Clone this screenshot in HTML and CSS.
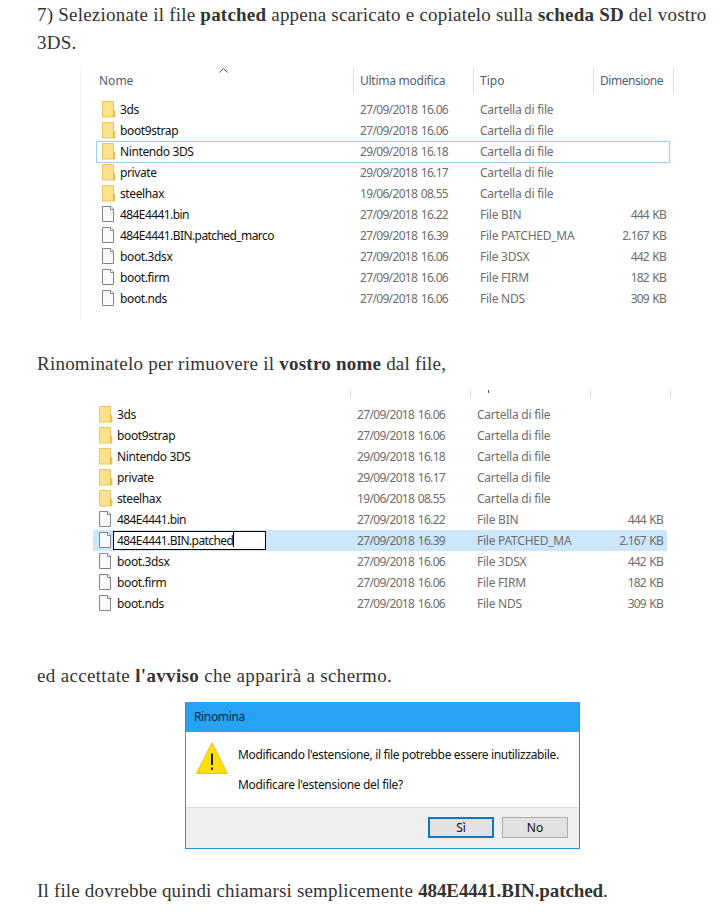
FILE: index.html
```html
<!DOCTYPE html>
<html lang="it">
<head>
<meta charset="utf-8">
<title>Guida 3DS</title>
<link rel="stylesheet" href="styles.css">
</head>
<body>
<svg class="sprite" aria-hidden="true">
  <symbol id="folder" viewBox="0 0 14 17"><path d="M.5.5h11v15.500H.5z" fill="#fde28b" stroke="#e8c65b"/><path d="M11.500 9.500h1.300v6.500h-1.300z" fill="#fce28b" stroke="#e3b93d"/></symbol>
  <symbol id="file" viewBox="0 0 14 17"><path d="M.5.5h8.500l2.500 2.500v12.500H.5z" fill="#f8f9fb" stroke="#858585"/><path d="M8.500.5v3h3" fill="#fff" stroke="#858585"/></symbol>
</svg>
<article>
  <p class="step">7) Selezionate il file <b>patched</b> appena scaricato e copiatelo sulla <b>scheda SD</b> del vostro<br>3DS.</p>

  <section class="explorer first">
    <div class="head">
      <span class="h-name">Nome<svg class="sort" viewBox="0 0 9 5"><path d="M.5 4.500l4-4 4 4" fill="none" stroke="#555"/></svg></span><span class="h-date">Ultima modifica</span><span class="h-type">Tipo</span><span class="h-size">Dimensione</span>
    </div>
    <div class="rows">
      <div class="row"><svg><use href="#folder"/></svg><span class="name">3ds</span><span class="date">27/09/2018 16.06</span><span class="type">Cartella di file</span><span class="size"></span></div>
      <div class="row"><svg><use href="#folder"/></svg><span class="name">boot9strap</span><span class="date">27/09/2018 16.06</span><span class="type">Cartella di file</span><span class="size"></span></div>
      <div class="row focused"><svg><use href="#folder"/></svg><span class="name">Nintendo 3DS</span><span class="date">29/09/2018 16.18</span><span class="type">Cartella di file</span><span class="size"></span></div>
      <div class="row"><svg><use href="#folder"/></svg><span class="name">private</span><span class="date">29/09/2018 16.17</span><span class="type">Cartella di file</span><span class="size"></span></div>
      <div class="row"><svg><use href="#folder"/></svg><span class="name">steelhax</span><span class="date">19/06/2018 08.55</span><span class="type">Cartella di file</span><span class="size"></span></div>
      <div class="row"><svg><use href="#file"/></svg><span class="name hex">484E4441.bin</span><span class="date">27/09/2018 16.22</span><span class="type">File BIN</span><span class="size">444 KB</span></div>
      <div class="row"><svg><use href="#file"/></svg><span class="name hex">484E4441.BIN.patched_marco</span><span class="date">27/09/2018 16.39</span><span class="type">File PATCHED_MA</span><span class="size">2.167 KB</span></div>
      <div class="row"><svg><use href="#file"/></svg><span class="name">boot.3dsx</span><span class="date">27/09/2018 16.06</span><span class="type">File 3DSX</span><span class="size">442 KB</span></div>
      <div class="row"><svg><use href="#file"/></svg><span class="name">boot.firm</span><span class="date">27/09/2018 16.06</span><span class="type">File FIRM</span><span class="size">182 KB</span></div>
      <div class="row"><svg><use href="#file"/></svg><span class="name">boot.nds</span><span class="date">27/09/2018 16.06</span><span class="type">File NDS</span><span class="size">309 KB</span></div>
    </div>
  </section>

  <p class="rename">Rinominatelo per rimuovere il <b>vostro nome</b> dal file,</p>

  <section class="explorer second">
    <div class="cut"><i></i><i class="tail"></i><i></i><i></i></div>
    <div class="rows">
      <div class="row"><svg><use href="#folder"/></svg><span class="name">3ds</span><span class="date">27/09/2018 16.06</span><span class="type">Cartella di file</span><span class="size"></span></div>
      <div class="row"><svg><use href="#folder"/></svg><span class="name">boot9strap</span><span class="date">27/09/2018 16.06</span><span class="type">Cartella di file</span><span class="size"></span></div>
      <div class="row"><svg><use href="#folder"/></svg><span class="name">Nintendo 3DS</span><span class="date">29/09/2018 16.18</span><span class="type">Cartella di file</span><span class="size"></span></div>
      <div class="row"><svg><use href="#folder"/></svg><span class="name">private</span><span class="date">29/09/2018 16.17</span><span class="type">Cartella di file</span><span class="size"></span></div>
      <div class="row"><svg><use href="#folder"/></svg><span class="name">steelhax</span><span class="date">19/06/2018 08.55</span><span class="type">Cartella di file</span><span class="size"></span></div>
      <div class="row"><svg><use href="#file"/></svg><span class="name hex">484E4441.bin</span><span class="date">27/09/2018 16.22</span><span class="type">File BIN</span><span class="size">444 KB</span></div>
      <div class="row selected"><svg><use href="#file"/></svg><span class="name hex"><span class="edit"><span class="caret">484E4441.BIN.patched</span></span></span><span class="date">27/09/2018 16.39</span><span class="type">File PATCHED_MA</span><span class="size">2.167 KB</span></div>
      <div class="row"><svg><use href="#file"/></svg><span class="name">boot.3dsx</span><span class="date">27/09/2018 16.06</span><span class="type">File 3DSX</span><span class="size">442 KB</span></div>
      <div class="row"><svg><use href="#file"/></svg><span class="name">boot.firm</span><span class="date">27/09/2018 16.06</span><span class="type">File FIRM</span><span class="size">182 KB</span></div>
      <div class="row"><svg><use href="#file"/></svg><span class="name">boot.nds</span><span class="date">27/09/2018 16.06</span><span class="type">File NDS</span><span class="size">309 KB</span></div>
    </div>
  </section>

  <p class="accept">ed accettate <b>l'avviso</b> che apparirà a schermo.</p>

  <section class="dialog">
    <header>Rinomina</header>
    <div class="message">
      <svg class="warn" viewBox="0 0 32 32"><path d="M16 .7L31.500 31.500H.5z" fill="#fbe000" stroke="#f6bd2b" stroke-linejoin="round"/><path d="M15 11.500h2v11.500h-2zM15 25.500h2v2.300h-2z" fill="#15130a"/></svg>
      <div class="copy"><p>Modificando l'estensione, il file potrebbe essere inutilizzabile.</p><p class="question">Modificare l'estensione del file?</p></div>
    </div>
    <footer><button class="default">Sì</button><button>No</button></footer>
  </section>

  <p class="result">Il file dovrebbe quindi chiamarsi semplicemente <b>484E4441.BIN.patched</b>.</p>
</article>
</body>
</html>
```
FILE: styles.css
```css
* { box-sizing: border-box; }
body { margin: 0; background: #fff; color: #333; overflow: hidden; }
.sprite { display: none; }
article { width: 724px; height: 912px; }
p { margin: 0; }
article > p { padding-left: 37px; font: 19px/28px "Liberation Serif", serif; white-space: nowrap; letter-spacing: .23px; }
article > .step { height: 66px; padding-top: 1px; letter-spacing: .22px; }

.explorer { font: 12px/21px "Noto Sans", sans-serif; color: #6d6d6d; white-space: nowrap; }
.first { height: 255px; margin-left: 80px; padding-left: 16px; border-left: 1px solid #f3f3f3; }
.first .rows { margin-top: 5px; margin-left: -1px; }
.head { display: flex; height: 28px; padding-top: 2px; color: #4c607a; line-height: 26px; }
.head > span { border-right: 1px solid #e2e2e2; }
.h-name { position: relative; width: 257px; padding-left: 2px; }
.sort { position: absolute; left: 122px; top: 0; width: 9px; height: 5px; }
.h-date { width: 120px; padding-left: 6px; letter-spacing: -.25px; }
.h-type { width: 120px; padding-left: 6px; }
.h-size { width: 80px; padding-left: 6px; letter-spacing: -.45px; }
.row { display: grid; grid-template-columns: 18px 240px 120px 120px 66px; width: 574px; height: 21px; padding-left: 6px; }
.row svg { width: 14px; height: 17px; margin-top: 2px; }
.name { color: #111; letter-spacing: -.43px; }
.name:not(.hex) { letter-spacing: -.38px; }
.hex { letter-spacing: -.58px; }
.date { letter-spacing: -.66px; word-spacing: 1px; }
.type { letter-spacing: -.24px; }
.size { text-align: right; letter-spacing: -.8px; word-spacing: 1.2px; }
.focused { outline: 1px solid #99cfea; outline-offset: -1px; height: 22px; margin-bottom: -1px; }

.rename { margin-top: 29px; }
.second { height: 223px; margin: 12px 0 0 93px; }
.cut { display: flex; gap: 119px; height: 14px; padding-left: 257px; }
.cut i { width: 1px; height: 8px; background: #e0e0e0; }
.cut i:last-child { margin-left: -40px; }
.cut .tail { position: relative; }
.cut .tail::after { content: ""; position: absolute; left: 18px; top: 0; width: 1px; height: 3px; background: #555; }
.selected { background: #cce6fc; }
.edit { display: block; width: 153px; height: 19px; margin: 1px 0 0 -4px; padding-left: 3px; border: 1px solid #000; background: #fff; line-height: 17px; }
.caret { display: inline-block; height: 15px; border-right: 1px solid #000; line-height: 17px; }

article > .accept { margin-top: 49px; letter-spacing: .33px; }
.dialog { width: 395px; height: 147px; margin: 12px 0 0 185px; border: 1px solid #1e95d4; font: 12px/30px "Noto Sans", sans-serif; color: #111; white-space: nowrap; }
.dialog header { height: 30px; padding-left: 8px; background: #26a3f2; color: #0b2540; margin-top: -1px; letter-spacing: -.35px; }
.message { display: flex; height: 75px; padding: 8px 0 0 10px; }
.warn { flex: none; width: 32px; height: 32px; margin-top: 2px; }
.copy { padding-left: 10px; letter-spacing: -.35px; }
.question { letter-spacing: -.31px; }
.dialog footer { display: flex; justify-content: flex-end; gap: 8px; height: 41px; padding: 9px 11px 0; background: #efefef; border-top: 1px solid #dcdcdc; }
button { width: 66px; height: 21px; padding: 0; border: 1px solid #adadad; background: #e1e1e1; color: #111; font: 12px/17px "Noto Sans", sans-serif; }
.default { border: 2px solid #1477c4; }
article > .result { margin-top: 28px; letter-spacing: .18px; }
.result b { letter-spacing: -.1px; }
```
